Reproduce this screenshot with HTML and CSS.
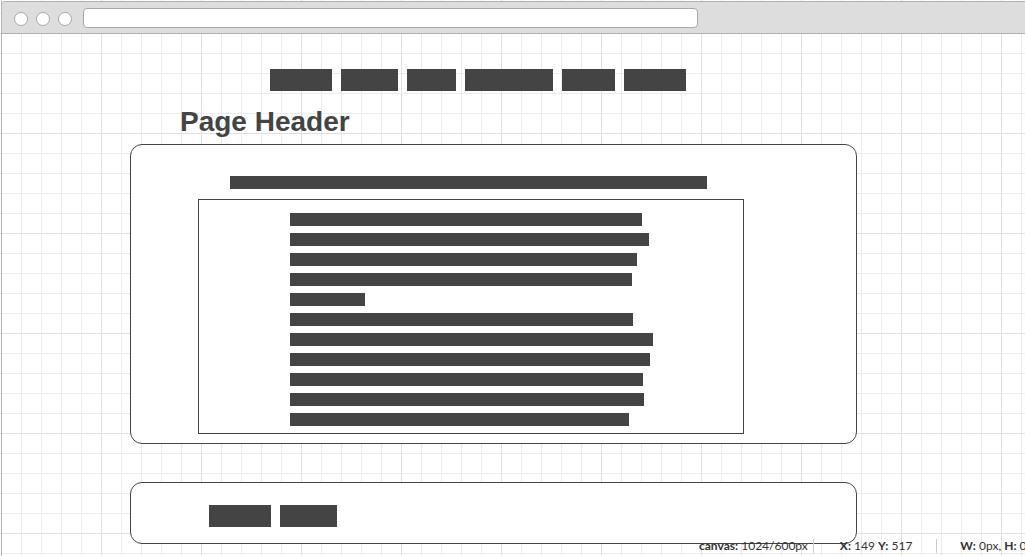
FILE: index.html
```html
<!DOCTYPE html>
<html lang="en">
<head>
<meta charset="utf-8">
<title>Wireframe</title>
<link rel="stylesheet" href="styles.css">
</head>
<body>
<div class="page">
  <div class="chrome">
    <span class="dot"></span>
    <span class="dot"></span>
    <span class="dot"></span>
    <span class="address"></span>
  </div>
  <div class="canvas">
    <nav class="nav">
      <span class="block" style="width:62px"></span>
      <span class="block" style="width:57px"></span>
      <span class="block" style="width:49px"></span>
      <span class="block" style="width:88px"></span>
      <span class="block" style="width:53px"></span>
      <span class="block" style="width:62px"></span>
    </nav>
    <h1 class="page-header">Page Header</h1>
    <section class="card card-main">
      <div class="title-bar"></div>
      <div class="text-box">
        <span class="line" style="width:352px"></span>
        <span class="line" style="width:359px"></span>
        <span class="line" style="width:347px"></span>
        <span class="line" style="width:342px"></span>
        <span class="line" style="width:75px"></span>
        <span class="line" style="width:343px"></span>
        <span class="line" style="width:363px"></span>
        <span class="line" style="width:360px"></span>
        <span class="line" style="width:353px"></span>
        <span class="line" style="width:354px"></span>
        <span class="line" style="width:339px"></span>
      </div>
    </section>
    <section class="card card-footer">
      <span class="block" style="width:62px"></span>
      <span class="block" style="width:57px"></span>
    </section>
  </div>
  <div class="status">
    <span class="item item-canvas"><b>canvas:</b> 1024/600px</span>
    <span class="sep sep-1"></span>
    <span class="item item-xy"><b>X:</b> 149 <b>Y:</b> 517</span>
    <span class="sep sep-2"></span>
    <span class="item item-wh"><b>W:</b> 0px, <b>H:</b> 0</span>
  </div>
</div>
</body>
</html>
```

FILE: styles.css
```css
html, body {
  margin: 0;
  padding: 0;
  height: 556px;
  overflow: hidden;
}

body {
  font-family: "Liberation Sans", Arial, sans-serif;
  background-color: #fff;
  background-image:
    linear-gradient(to right, #e0e0e0 1px, transparent 1px),
    linear-gradient(to bottom, #e0e0e0 1px, transparent 1px),
    linear-gradient(to right, #ececec 1px, transparent 1px),
    linear-gradient(to bottom, #ececec 1px, transparent 1px);
  background-size: 100px 100px, 100px 100px, 20px 20px, 20px 20px;
  background-position: 1px 33px, 1px 33px, 1px 13px, 1px 13px;
}

.page {
  position: relative;
  margin-left: 1px;
  border-left: 1px solid #b4b4b4;
  height: 556px;
  box-sizing: border-box;
}

.chrome {
  margin-top: 1px;
  height: 31px;
  background: #dddddd;
  border-top: 1px solid #b0b0b0;
  border-bottom: 1px solid #b0b0b0;
  border-top-left-radius: 3px;
  display: flex;
  align-items: flex-start;
  padding-left: 12px;
  gap: 8px;
}

.dot {
  width: 14px;
  height: 14px;
  box-sizing: border-box;
  margin-top: 10px;
  border-radius: 50%;
  background: #fff;
  border: 1px solid #a8a8a8;
}

.address {
  margin-top: 6px;
  margin-left: 3px;
  width: 615px;
  height: 20px;
  box-sizing: border-box;
  background: #fff;
  border: 1px solid #a8a8a8;
  border-radius: 4px;
}

.canvas {
  display: flex;
  flex-direction: column;
  align-items: flex-start;
}

.block {
  display: block;
  height: 22px;
  background: #444444;
}

.nav {
  display: flex;
  gap: 9px;
  margin-top: 35px;
  padding-left: 268px;
}

.page-header {
  margin: 15px 0 0 0;
  padding-left: 178px;
  font-size: 28px;
  line-height: 32px;
  font-weight: bold;
  color: #444444;
}

.card {
  box-sizing: border-box;
  width: 727px;
  margin-left: 128px;
  border: 1px solid #444444;
  border-radius: 12px;
  background: #fff;
}

.card-main {
  margin-top: 6px;
  height: 300px;
  padding: 31px 0 0 67px;
}

.title-bar {
  width: 477px;
  height: 13px;
  margin-left: 32px;
  background: #444444;
}

.text-box {
  margin-top: 10px;
  box-sizing: border-box;
  width: 546px;
  height: 235px;
  border: 1px solid #444444;
  padding: 13px 0 0 91px;
  display: flex;
  flex-direction: column;
  gap: 7px;
}

.line {
  display: block;
  height: 13px;
  background: #444444;
}

.card-footer {
  margin-top: 38px;
  height: 62px;
  padding: 22px 0 0 78px;
  display: flex;
  align-items: flex-start;
  gap: 9px;
}

.status {
  position: absolute;
  left: 697px;
  top: 538px;
  display: flex;
  align-items: flex-start;
  white-space: nowrap;
  font-family: Lato, "Liberation Sans", sans-serif;
  font-size: 12px;
  line-height: 14px;
  color: #333333;
}

.status b {
  font-weight: bold;
}

.sep {
  display: block;
  width: 1px;
  height: 14px;
  background: #cccccc;
}

.sep-1 {
  margin: 0 26px 0 5px;
}

.sep-2 {
  margin: 0 23px 0 24px;
}
```
